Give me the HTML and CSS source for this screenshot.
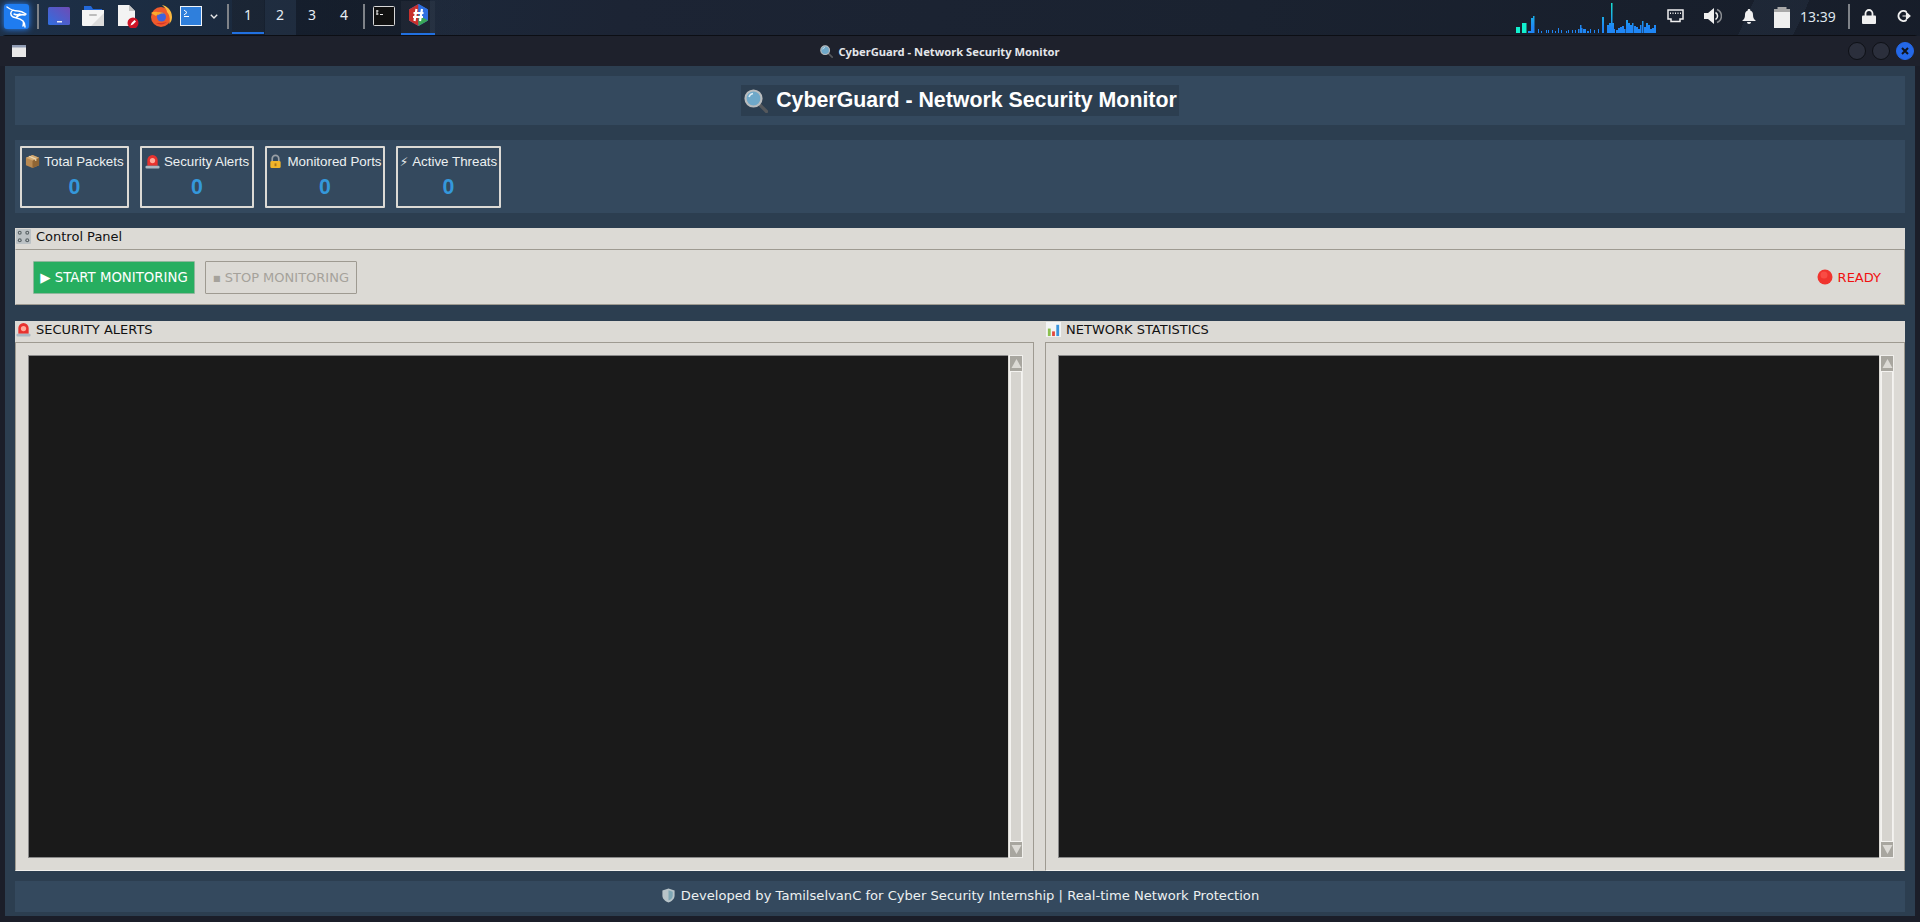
FILE: index.html
```html
<!DOCTYPE html>
<html lang="en">
<head>
<meta charset="utf-8">
<title>CyberGuard - Network Security Monitor</title>
<link rel="stylesheet" href="styles.css">
</head>
<body>
<svg class="defs" width="0" height="0" aria-hidden="true">
  <defs>
    <symbol id="e-mag" viewBox="0 0 24 24">
      <path d="M14.500 14.500l8 8" stroke="#55585c" stroke-width="3.200" stroke-linecap="round"/>
      <circle cx="9.500" cy="9.500" r="8" fill="#6fa8c9" stroke="#b9bcbe" stroke-width="2.200"/>
      <path d="M5 8a5 5 0 0 1 4-3.500" fill="none" stroke="#dcecf4" stroke-width="1.500"/>
    </symbol>
    <symbol id="e-box" viewBox="0 0 16 16">
      <path d="M8 1l7 3v8l-7 3-7-3V4z" fill="#b98a52"/>
      <path d="M8 7l7-3v8l-7 3z" fill="#8f6534"/>
      <path d="M1 4l7-3 7 3-7 3z" fill="#d3aa73"/>
      <path d="M4.500 2.500l7 3v2" fill="none" stroke="#ecd9b4" stroke-width="1.200"/>
    </symbol>
    <symbol id="e-siren" viewBox="0 0 16 16">
      <path d="M2.500 12.500V6.500a5.500 5.500 0 0 1 11 0v6z" fill="#e8322e"/>
      <circle cx="8" cy="7" r="2.800" fill="#ffa99a"/>
      <rect x=".5" y="12.500" width="15" height="3" rx="1.200" fill="#a9b7c2"/>
    </symbol>
    <symbol id="e-lock" viewBox="0 0 16 16">
      <path d="M4.500 8V5a3.500 3.500 0 0 1 7 0v3" fill="none" stroke="#9aa0a6" stroke-width="1.800"/>
      <rect x="2.500" y="7.500" width="11" height="7.500" rx="1.500" fill="#f0b429"/>
      <rect x="7" y="10" width="2" height="3" fill="#a8741a"/>
    </symbol>
    <symbol id="e-knobs" viewBox="0 0 16 16">
      <rect x="0" y="0" width="16" height="16" rx="1" fill="#bcc2c5"/>
      <circle cx="4" cy="4" r="2.100" fill="#5d666a"/><circle cx="12" cy="4" r="2.100" fill="#5d666a"/>
      <circle cx="4" cy="12" r="2.100" fill="#5d666a"/><circle cx="12" cy="12" r="2.100" fill="#5d666a"/>
      <circle cx="4" cy="4" r=".8" fill="#dfe3e5"/><circle cx="12" cy="4" r=".8" fill="#dfe3e5"/>
      <circle cx="4" cy="12" r=".8" fill="#dfe3e5"/><circle cx="12" cy="12" r=".8" fill="#dfe3e5"/>
    </symbol>
    <symbol id="e-chart" viewBox="0 0 16 16">
      <rect width="16" height="16" fill="#f2f4f5"/>
      <rect x="2" y="7" width="3" height="8" fill="#8cbf4f"/>
      <rect x="6.500" y="10" width="3" height="5" fill="#e2483d"/>
      <rect x="11" y="3" width="3" height="12" fill="#3b94dc"/>
    </symbol>
    <symbol id="e-dot" viewBox="0 0 16 16">
      <circle cx="8" cy="8" r="7.500" fill="#f0342e"/>
      <circle cx="7" cy="6" r="3.500" fill="#f94c44"/>
    </symbol>
    <symbol id="e-shield" viewBox="0 0 16 16">
      <path d="M8 .5l6.500 2.200V8c0 3.700-3 6.200-6.500 7.500C4.500 14.200 1.500 11.700 1.500 8V2.700z" fill="#b8c4c9"/>
      <path d="M8 2.500l4.500 1.500v4c0 2.700-2 4.400-4.500 5.400z" fill="#7fa7b5"/>
    </symbol>
  </defs>
</svg>

<header class="panel">
  <div class="panel-left">
    <svg class="kali" width="25" height="25" viewBox="0 0 25 25">
      <rect width="25" height="25" rx="3" fill="#1f7cf0"/>
      <path d="M3 3c4 3 7 4 11 4 3 0 5 1 8 3M9 6c-3 2-3 5 0 7 3 1 7 1 10 4 2 2 2 4 2 6M12 14c2-3 5-4 9-3M10 10c2 1 4 1 6 0M19 17c1 2 1 3 0 5" fill="none" stroke="#fff" stroke-width="1.500" stroke-linecap="round"/>
    </svg>
    <span class="pseparator"></span>
    <svg class="launcher desk" width="22" height="18" viewBox="0 0 22 18">
      <defs><linearGradient id="dg" x1="0" y1="1" x2="1" y2="0"><stop offset="0" stop-color="#2f6fe0"/><stop offset="1" stop-color="#6f4bb5"/></linearGradient></defs>
      <rect width="22" height="18" rx="1.500" fill="url(#dg)"/>
      <rect x="9" y="14" width="5" height="1.500" fill="#e8eaf5"/>
    </svg>
    <svg class="launcher" width="22" height="20" viewBox="0 0 22 20">
      <path d="M2 0h7l2 3h9v3H2z" fill="#2368d8"/>
      <path d="M0 4h22v15a1 1 0 0 1-1 1H1a1 1 0 0 1-1-1z" fill="#f5f5f5"/>
      <path d="M22 7v12a1 1 0 0 1-1 1H9z" fill="#dcdcdc"/>
      <rect x="7" y="8" width="8" height="2" rx="1" fill="#bdbdbd"/>
    </svg>
    <svg class="launcher" width="22" height="23" viewBox="0 0 22 23">
      <path d="M1 0h11l6 6v15H1z" fill="#f3f3f3"/>
      <path d="M12 0l6 6h-6z" fill="#c5c5c5"/>
      <circle cx="16" cy="18" r="5.500" fill="#cf1426"/>
      <path d="M13.500 20.500l1-2.500 3-3 1.500 1.500-3 3z" fill="#fff"/>
    </svg>
    <svg class="launcher" width="22" height="22" viewBox="0 0 22 22">
      <circle cx="11" cy="12" r="10" fill="#ee5a2c"/>
      <path d="M12 0c5 1 10 5 10 12 0 3-1 5-3 7 2-5 0-10-2-12 0-3-3-5-5-7z" fill="#fcb93f"/>
      <path d="M1 8c2-1 6-2 8 0l-3 3z" fill="#fbaa2e"/>
      <circle cx="11.500" cy="12" r="4.500" fill="#3d63dd"/>
      <path d="M6 8c3-2 6-1 9 1-3-1-5 0-7 1z" fill="#f9a12a"/>
      <path d="M6 18c3 2 8 2 11-1-3 1-7 1-11 1z" fill="#d9302a"/>
    </svg>
    <svg class="launcher" width="22" height="20" viewBox="0 0 22 20">
      <rect x=".5" y=".5" width="21" height="19" fill="#2f7fdc" stroke="#f0f4f8"/>
      <path d="M4 4l3 2.500L4 9M4 10.500h5" fill="none" stroke="#fff" stroke-width="1"/>
    </svg>
    <svg class="chevron" width="8" height="5" viewBox="0 0 8 5"><path d="M.8.8L4 4l3.200-3.200" fill="none" stroke="#e8e8e8" stroke-width="1.400"/></svg>
    <span class="pseparator sep-work"></span>
    <div class="workspaces">
      <span class="ws ws-on">1</span><span class="ws">2</span><span class="ws">3</span><span class="ws">4</span>
    </div>
    <span class="pseparator sep-tasks"></span>
    <svg class="launcher term" width="22" height="20" viewBox="0 0 22 20">
      <rect x=".5" y=".5" width="21" height="19" rx="1" fill="#111" stroke="#d8d8d8"/>
      <path d="M4 4v5M3.500 5h2M3.500 8h2M7 8.500h3" fill="none" stroke="#eee" stroke-width="1"/>
    </svg>
    <div class="task">
      <svg width="19" height="22" viewBox="0 0 19 22">
        <path d="M9.500 0L19 5.500v11L9.500 22 0 16.500v-11z" fill="#2f6fe0"/>
        <path d="M9.500 0L0 5.500v11l9.500 5.500z" fill="#c9302c"/>
        <path d="M9.500 11L19 16.500 9.500 22z" fill="#3aa655"/>
        <path d="M9.500 0L19 5.500 9.500 11z" fill="#2f6fe0"/>
        <path d="M7.500 5l-2 12M13 5l-2 12M4.500 9h10M4 13h10" fill="none" stroke="#fff" stroke-width="2.200"/>
      </svg>
    </div>
  </div>
  <div class="panel-right">
    <svg class="graph" width="144" height="30" viewBox="0 0 144 30">
      <defs><linearGradient id="gg" gradientUnits="userSpaceOnUse" x1="0" y1="0" x2="0" y2="24"><stop offset="0" stop-color="#16e0d0"/><stop offset="1" stop-color="#1f86f5"/></linearGradient></defs>
      <path fill="#12f0cf" d="M0 24h4v6H0zM6 20h4.500v10H6z"/>
      <path fill="url(#gg)" d="M12 28h3v2h-3zM15 15h2v15h-2zM17 13h1.500v17H17zM22 26h1v4h-1zM25 28h1v2h-1zM30 27h1v3h-1zM32 27h1v3h-1zM36 27h1v3h-1zM39 28h1v2h-1zM42 25h1v5h-1zM45 27h1v3h-1zM50 28h1v2h-1zM52 27h1v3h-1zM56 27h1v3h-1zM59 27h1v3h-1zM62 26h1.500v4H62zM64 22h1.500v8H64zM65.500 25h1v5h-1zM67 26h3v4h-3zM71 28h2v2h-2zM74 26h1v4h-1zM78 27h1v3h-1zM82 26h1v4h-1zM86 14h2v16h-2zM91 22h2v8h-2zM93 20h2v10h-2zM95 0h1.500v30H95zM96.500 20h1.500v10h-1.500zM98 26h1v4h-1zM100 27h2v3h-2zM102 25h2v5h-2zM104 24h2v6h-2zM106 23h2v7h-2zM108 26h1.500v4H108zM110 17h2v13h-2zM112 20h2v10h-2zM114 22h2v8h-2zM116 20h1.500v10H116zM118 23h2v7h-2zM120 24h2v6h-2zM122 26h2v4h-2zM124 22h1.500v8H124zM126 18h1.500v12H126zM128 24h2v6h-2zM130 20h2v10h-2zM132 22h2v8h-2zM134 26h2v4h-2zM136 25h2v5h-2zM138 22h2v8h-2z"/>
    </svg>
    <svg class="tray-net" width="17" height="14" viewBox="0 0 17 14">
      <path d="M1 1h15v9h-3v2.500H4V10H1z" fill="#1b2230" stroke="#f0f0f0" stroke-width="1.500"/>
      <path d="M3.500 3.500v1.500M6 3.500v1.500M8.500 3.500v1.500M11 3.500v1.500M13.500 3.500v1.500" stroke="#f0f0f0" stroke-width="1"/>
    </svg>
    <svg class="tray-vol" width="18" height="16" viewBox="0 0 18 16">
      <path d="M0 5h4l6-5v16l-6-5H0z" fill="#f0f0f0"/>
      <path d="M11.500 4.500a4 4 0 0 1 0 7" fill="none" stroke="#f0f0f0" stroke-width="1.500"/>
      <path d="M13 1.500a7 7 0 0 1 0 13" fill="none" stroke="#8a8d92" stroke-width="1.500"/>
    </svg>
    <svg class="tray-bell" width="14" height="15" viewBox="0 0 14 15">
      <path d="M7 0a1.200 1.200 0 0 1 1.200 1.500C10.500 2 11 4 11 6c0 3 1 4.500 3 6H0c2-1.500 3-3 3-6 0-2 .5-4 2.800-4.500A1.200 1.200 0 0 1 7 0z" fill="#f0f0f0"/>
      <path d="M5 13h4a2 2 0 0 1-4 0z" fill="#f0f0f0"/>
    </svg>
    <svg class="tray-bat" width="16" height="21" viewBox="0 0 16 21">
      <rect x="3.500" y="0" width="9" height="2" fill="#a8a8a8"/>
      <rect x="0" y="2" width="16" height="3" fill="#a8a8a8"/>
      <rect x="0" y="5" width="16" height="16" fill="#efefef"/>
    </svg>
    <span class="clock">13:39</span>
    <span class="pseparator sep-clock"></span>
    <svg class="tray-lock" width="14" height="15" viewBox="0 0 14 15">
      <path d="M3.500 7V4.500a3.500 3.500 0 0 1 7 0V7" fill="none" stroke="#f0f0f0" stroke-width="1.800"/>
      <rect y="6.500" width="14" height="8.500" rx="1" fill="#f0f0f0"/>
    </svg>
    <svg class="tray-out" width="14" height="14" viewBox="0 0 14 14">
      <path d="M9.500 3A5 5 0 1 0 9.500 11" fill="none" stroke="#f0f0f0" stroke-width="2"/>
      <path d="M5.500 7H11M9.500 3.800L13 7l-3.500 3.200z" fill="#f0f0f0" stroke="#f0f0f0" stroke-width="1.200"/>
    </svg>
  </div>
</header>

<div class="window">
  <div class="titlebar">
    <svg class="win-icon" width="14" height="12" viewBox="0 0 14 12">
      <rect width="14" height="12" fill="#e8e8e8"/>
      <rect width="14" height="2.500" fill="#8f9bb3"/>
    </svg>
    <div class="win-title"><svg class="emoji-sm" width="13" height="13"><use href="#e-mag"/></svg> CyberGuard - Network Security Monitor</div>
    <div class="win-buttons">
      <span class="win-btn"></span>
      <span class="win-btn"></span>
      <span class="win-btn win-close">
        <svg width="8" height="8" viewBox="0 0 8 8"><path d="M1 1l6 6M7 1L1 7" stroke="#10141c" stroke-width="2"/></svg>
      </span>
    </div>
  </div>

  <main class="app">
    <section class="banner">
      <h1 class="banner-title"><svg class="emoji-title" width="24" height="24"><use href="#e-mag"/></svg><span>CyberGuard - Network Security Monitor</span></h1>
    </section>

    <section class="stats">
      <div class="card card-a">
        <div class="card-label"><svg class="emoji" width="15" height="15"><use href="#e-box"/></svg> Total Packets</div>
        <div class="card-value">0</div>
      </div>
      <div class="card card-b">
        <div class="card-label"><svg class="emoji" width="15" height="15"><use href="#e-siren"/></svg> Security Alerts</div>
        <div class="card-value">0</div>
      </div>
      <div class="card card-c">
        <div class="card-label"><svg class="emoji" width="15" height="15"><use href="#e-lock"/></svg> Monitored Ports</div>
        <div class="card-value">0</div>
      </div>
      <div class="card card-d">
        <div class="card-label"><span class="bolt">⚡</span> Active Threats</div>
        <div class="card-value">0</div>
      </div>
    </section>

    <section class="control">
      <div class="strip"><svg class="emoji-strip" width="15" height="15"><use href="#e-knobs"/></svg>Control Panel</div>
      <div class="control-frame">
        <button class="btn btn-start" type="button">▶ START MONITORING</button>
        <button class="btn btn-stop" type="button" disabled><span class="stop-mark">■</span> STOP MONITORING</button>
        <div class="status"><svg class="emoji-dot" width="16" height="16"><use href="#e-dot"/></svg>READY</div>
      </div>
    </section>

    <section class="monitors">
      <div class="monitor">
        <div class="strip"><svg class="emoji-strip" width="15" height="15"><use href="#e-siren"/></svg>SECURITY ALERTS</div>
        <div class="monitor-frame">
          <div class="console"></div>
          <div class="scrollbar">
            <span class="sb-arrow"><svg width="11" height="11" viewBox="0 0 11 11"><path d="M5.500 1L10.500 10H.5z" fill="#dcdad5"/></svg></span>
            <span class="sb-track"></span>
            <span class="sb-arrow"><svg width="11" height="11" viewBox="0 0 11 11"><path d="M5.500 10L10.500 1H.5z" fill="#dcdad5"/></svg></span>
          </div>
        </div>
      </div>
      <div class="monitor">
        <div class="strip"><svg class="emoji-strip" width="15" height="15"><use href="#e-chart"/></svg>NETWORK STATISTICS</div>
        <div class="monitor-frame">
          <div class="console"></div>
          <div class="scrollbar">
            <span class="sb-arrow"><svg width="11" height="11" viewBox="0 0 11 11"><path d="M5.500 1L10.500 10H.5z" fill="#dcdad5"/></svg></span>
            <span class="sb-track"></span>
            <span class="sb-arrow"><svg width="11" height="11" viewBox="0 0 11 11"><path d="M5.500 10L10.500 1H.5z" fill="#dcdad5"/></svg></span>
          </div>
        </div>
      </div>
    </section>

    <footer class="foot"><svg class="emoji-foot" width="15" height="15"><use href="#e-shield"/></svg>Developed by TamilselvanC for Cyber Security Internship | Real-time Network Protection</footer>
  </main>
</div>
</body>
</html>
```

FILE: styles.css
```css
* { box-sizing: border-box; }
html, body { margin: 0; padding: 0; }
body {
  width: 1920px;
  height: 922px;
  overflow: hidden;
  display: flex;
  flex-direction: column;
  font-family: "DejaVu Sans", sans-serif;
  background:
    linear-gradient(115deg, transparent 0 1590px, rgba(60,80,105,.18) 1590px 1640px, transparent 1640px),
    linear-gradient(90deg, transparent 0 232px, rgba(14,16,22,.35) 232px 265px, rgba(50,58,72,.18) 265px 296px, rgba(12,14,20,.4) 296px 430px, rgba(40,50,65,.2) 430px 470px, transparent 470px),
    linear-gradient(100deg, #1d3048 0%, #1b2a3e 12%, #1c2434 30%, #1a2230 60%, #161c28 100%);
}
.defs { position: absolute; }
svg { display: block; flex: none; }

/* top panel */
.panel {
  height: 35px;
  flex: none;
  display: flex;
  justify-content: space-between;
  align-items: center;
}
.panel-left, .panel-right { display: flex; align-items: center; height: 35px; }
.panel-left { padding-left: 4px; }
.kali { margin-top: -3px; filter: drop-shadow(0 0 3px #2a86ff); }
.pseparator { width: 2px; height: 25px; background: #7e8288; margin-top: -3px; flex: none; }
.panel-left > .pseparator:first-of-type { margin-left: 8px; }
.launcher { margin-top: -3px; }
.desk { margin-left: 9px; }
.desk + .launcher { margin-left: 12px; }
.desk + .launcher + .launcher { margin-left: 13px; }
.desk + .launcher + .launcher + .launcher { margin-left: 11px; }
.desk + .launcher + .launcher + .launcher + .launcher { margin-left: 8px; }
.chevron { margin: -3px 0 0 8px; }
.sep-work { margin-left: 9px; }
.workspaces { display: flex; height: 35px; margin-left: 3px; }
.ws {
  width: 32px;
  height: 34px;
  display: flex;
  align-items: center;
  justify-content: center;
  font: 14px "Noto Sans", sans-serif;
  color: #e6edf5;
  padding-bottom: 3px;
  border-bottom: 2px solid transparent;
}
.ws-on { border-bottom-color: #2170e0; background: rgba(255,255,255,.02); }
.sep-tasks { margin-left: 3px; }
.term { margin-left: 8px; }
.task {
  width: 34px;
  height: 34px;
  margin-left: 6px;
  display: flex;
  align-items: center;
  justify-content: center;
  padding-bottom: 3px;
  border-bottom: 2px solid #2170e0;
  background: rgba(255,255,255,.04);
}
.graph { margin: 0 7px 0 0; }
.tray-net { margin: -3px 0 0 0; }
.tray-vol { margin: -3px 0 0 20px; }
.tray-bell { margin: -3px 0 0 20px; }
.tray-bat { margin: -1px 0 0 18px; }
.clock { font: 14px "Noto Sans", sans-serif; color: #dfe6ee; margin: -3px 0 0 10px; width: 36px; }
.sep-clock { margin-left: 12px; }
.tray-lock { margin: -3px 0 0 12px; }
.tray-out { margin: -3px 9px 0 21px; }

/* window */
.window {
  flex: 1;
  min-height: 0;
  display: flex;
  flex-direction: column;
  background: #1b1e29;
  border-top: 1px solid #0c0e14;
  border-radius: 6px 6px 0 0;
  padding: 0 5px 6px;
}
.titlebar {
  height: 30px;
  flex: none;
  display: flex;
  align-items: center;
  justify-content: space-between;
  margin: 0 -5px;
  padding: 0 6px 0 12px;
  background: #1e212c;
}
.win-title {
  margin-left: 5px;
  display: flex;
  align-items: center;
  gap: 3px;
  font: bold 11.200px "Noto Sans", sans-serif;
  color: #e4e6ea;
  white-space: pre;
}
.win-buttons { display: flex; gap: 6px; }
.win-btn {
  width: 18px;
  height: 18px;
  border-radius: 50%;
  background: #2b2f3c;
  border: 1px solid #0e1016;
  display: flex;
  align-items: center;
  justify-content: center;
}
.win-close { background: #2468e8; border-color: #2468e8; }

/* app */
.app {
  flex: 1;
  min-height: 0;
  display: flex;
  flex-direction: column;
  background: #2c3e50;
  padding: 10px 10px 4px;
}
.banner {
  height: 49px;
  flex: none;
  display: flex;
  align-items: center;
  justify-content: center;
  background: #34495e;
}
.banner-title {
  margin: 0;
  height: 31px;
  padding: 0 2px 0 3px;
  background: #2c3e50;
  display: flex;
  align-items: center;
  gap: 8px;
  font: bold 21.330px "Liberation Sans", sans-serif;
  color: #fff;
}
.stats {
  margin-top: 15px;
  height: 73px;
  flex: none;
  display: flex;
  gap: 11px;
  padding: 6px 5px 5px;
  background: #34495e;
}
.card {
  height: 62px;
  border: 2px solid #dcdad5;
  border-radius: 1px;
  display: flex;
  flex-direction: column;
  align-items: center;
  color: #fff;
}
.card-a { width: 109px; }
.card-b { width: 114px; }
.card-c { width: 120px; }
.card-d { width: 105px; }
.card-label {
  margin-top: 6px;
  display: flex;
  align-items: center;
  gap: 4px;
  font: 13.330px "Liberation Sans", sans-serif;
  color: #ecf0f1;
  white-space: nowrap;
}
.bolt { font: 12px "DejaVu Sans", sans-serif; }
.card-value {
  margin-top: 6px;
  font: bold 21.330px "Liberation Sans", sans-serif;
  color: #3498db;
}
.strip {
  height: 21px;
  flex: none;
  display: flex;
  align-items: center;
  gap: 5px;
  padding: 0 0 5px 1px;
  background: #dcdad5;
  font-size: 13px;
  color: #111;
}
.control { margin-top: 15px; flex: none; }
.control-frame {
  height: 56px;
  display: flex;
  align-items: center;
  gap: 10px;
  padding: 0 23px 0 17px;
  background: #dcdad5;
  border: 1px solid #9e9a91;
  border-left-color: #dcdad5;
  border-top-color: #9e9a91;
}
.btn {
  height: 33px;
  padding: 0;
  font: 13px "DejaVu Sans", sans-serif;
  border-radius: 1px;
  white-space: nowrap;
}
.btn-start { width: 162px; font-size: 13.300px; background: #27ae60; border: 1px solid #8fb79c; color: #fff; }
.btn-stop { width: 152px; background: #dcdad5; border: 1px solid #9e9a91; color: #a5a29b; }
.stop-mark { font-size: 8px; vertical-align: 1px; }
.status {
  margin-left: auto;
  display: flex;
  align-items: center;
  gap: 5px;
  font-size: 13px;
  color: #f01010;
}
.monitors {
  margin-top: 16px;
  flex: 1;
  min-height: 0;
  display: flex;
  gap: 11px;
  background: #dcdad5;
}
.monitor { display: flex; flex-direction: column; }
.monitor:first-child { width: 1019px; }
.monitor:last-child { width: 860px; }
.monitor-frame {
  flex: 1;
  min-height: 0;
  display: flex;
  padding: 12px 10px 12px 12px;
  border: 1px solid #9e9a91;
  border-bottom-color: #f2f1ee;
}
.console { flex: 1; background: #1a1a1a; border: 1px solid #8a8a8a; border-right: 0; }
.scrollbar {
  width: 14px;
  margin-left: 1px;
  display: flex;
  flex-direction: column;
  background: #d4d2cd;
  border: 1px solid #f0efec;
}
.sb-arrow {
  height: 15px;
  flex: none;
  display: flex;
  align-items: center;
  justify-content: center;
  background: #a8a69f;
}
.sb-track { flex: 1; background: #d6d4cf; border: 1px solid #f4f3f0; }
.foot {
  margin-top: 10px;
  height: 31px;
  flex: none;
  display: flex;
  align-items: center;
  justify-content: center;
  gap: 5px;
  padding-bottom: 2px;
  background: #34495e;
  color: #ecf0f1;
  font-size: 13.110px;
}
```
